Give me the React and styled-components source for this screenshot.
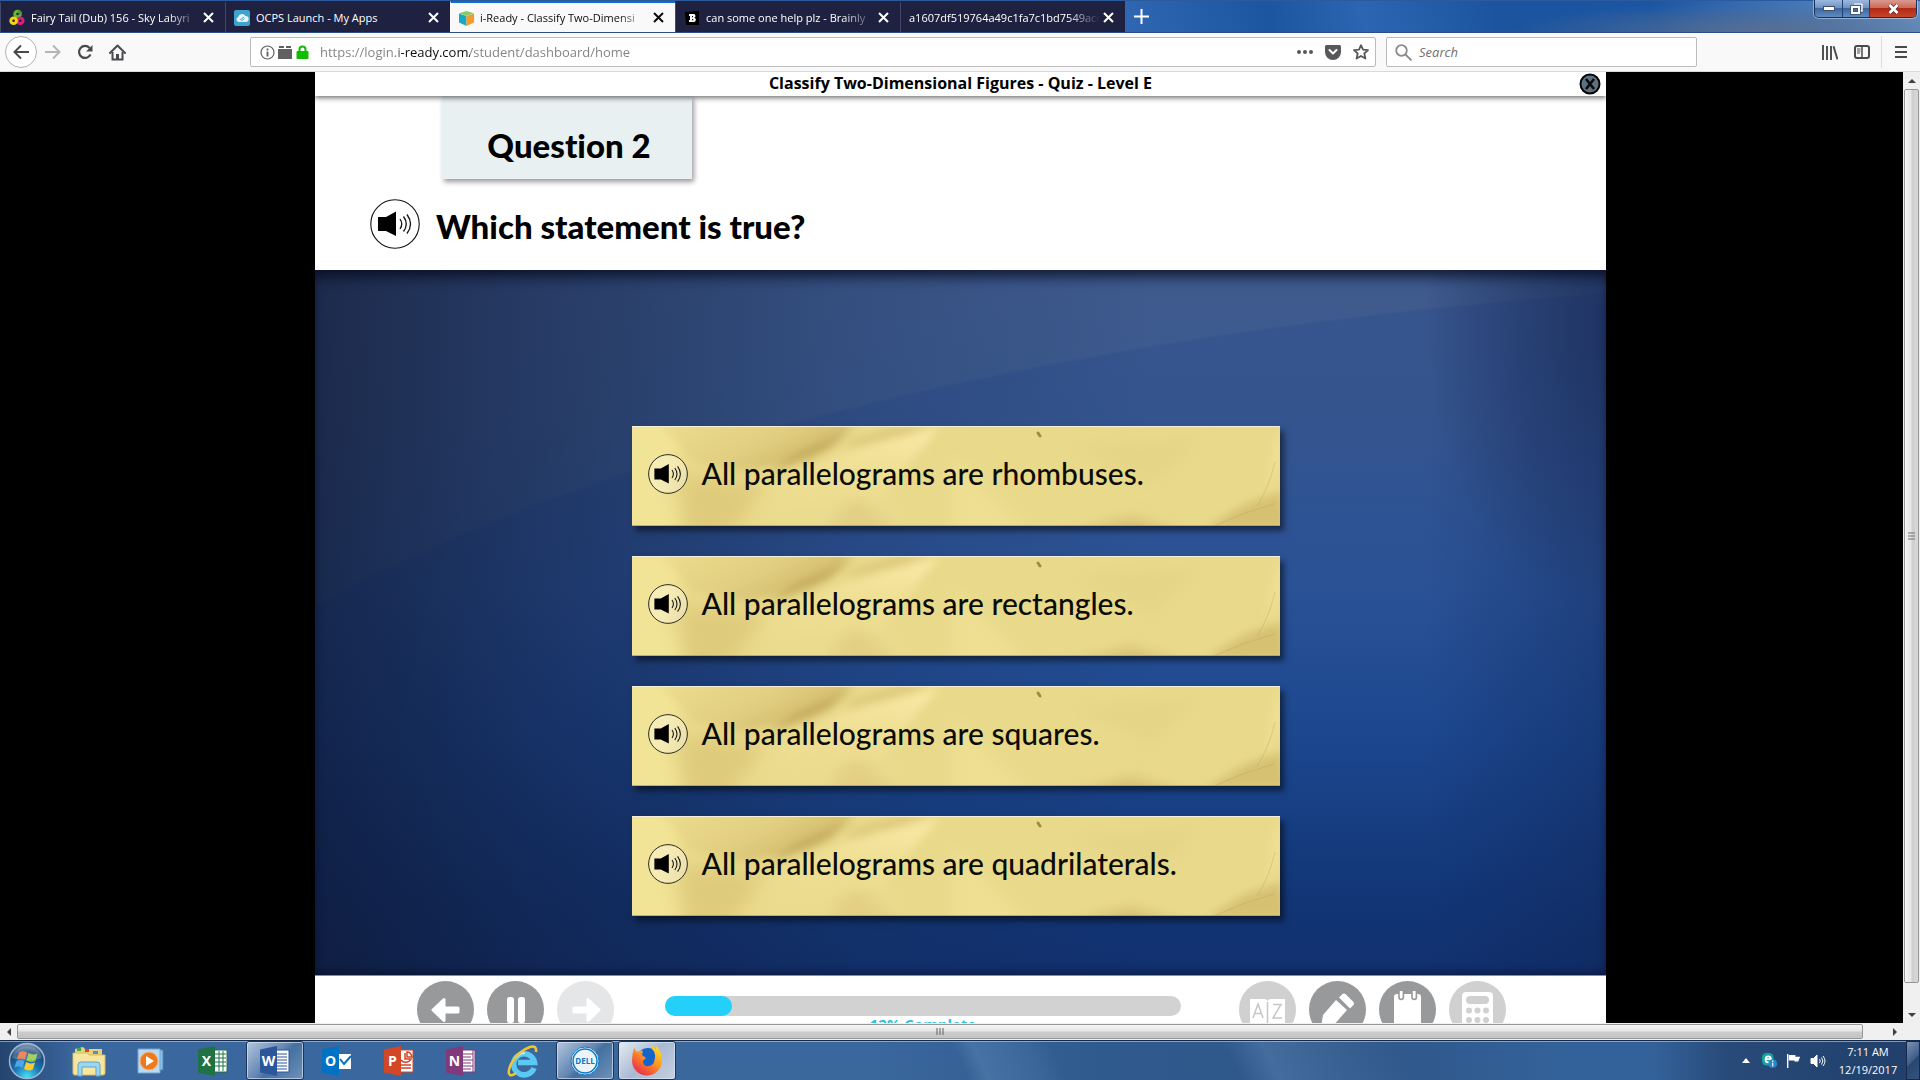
import styled, { createGlobalStyle } from 'styled-components'

const GlobalStyle = createGlobalStyle`
*{
box-sizing:border-box;
}
body{
margin:0;
background-color:#000;
font-family:"Open Sans","Noto Sans",sans-serif;
}
button{
border:0;
padding:0;
margin:0;
background:none;
color:inherit;
font:inherit;
cursor:pointer;
}
svg{
display:block;
flex-shrink:0;
}
`;

const Desktop = styled.div`
height:100vh;
display:flex;
flex-direction:column;
overflow:hidden;
`;

/* tab strip */
const TabStrip = styled.div`
height:33px;
display:flex;
align-items:stretch;
border-top:1px solid #2d5a9c;
border-bottom:1px solid #2a4f86;
background:
radial-gradient(ellipse 260px 30px at 92% 100%, rgba(92,110,140,.9), rgba(92,110,140,0) 100%),
linear-gradient(75deg, #3068b4 58%, #1c55a0 66%, #2c66b2 71%, #1b539e 78%, #1a56a4 86%, #4a7dbd 95%, #6a97cc 100%);
`;
const Tab = styled.div`
width:225px;
flex:0 1 auto;
display:flex;
align-items:center;
padding:0 9px 0 8px;
color:${(p) => (p.$active ? '#0c0c0d' : '#fff')};
background-color:${(p) => (p.$active ? '#f9f9fa' : '#1f2140')};
border-top:2px solid ${(p) => (p.$active ? '#0a6cd4' : '#1f2140')};
border-left:1px solid ${(p) => (p.$active ? '#f9f9fa' : '#45476a')};
`;
const TabButton = styled.button`
flex:1;
min-width:0;
height:100%;
display:flex;
align-items:center;
gap:6px;
text-align:left;
`;
const TabTitle = styled.span`
flex:1;
min-width:0;
overflow:hidden;
white-space:nowrap;
font-size:11px;
line-height:16px;
mask-image:${(p) => (p.$fade ? 'linear-gradient(to left, transparent, #000 32px)' : 'none')};
`;
const TabClose = styled.button`
width:16px;
height:16px;
display:flex;
align-items:center;
justify-content:center;
`;
const NewTab = styled.button`
width:32px;
display:flex;
align-items:center;
justify-content:center;
color:#fff;
`;
const WindowButtons = styled.div`
display:flex;
height:18px;
margin:-1px 3px 0 auto;
border:1px solid #1b2f55;
border-top:0;
border-radius:0 0 5px 5px;
overflow:hidden;
box-shadow:0 0 0 1px rgba(255,255,255,.4);
`;
const WindowButton = styled.button`
width:${(p) => (p.$close ? '47px' : '27px')};
display:flex;
align-items:center;
justify-content:center;
border-left:${(p) => (p.$first ? '0' : '1px solid #24406e')};
background:${(p) => (p.$close
    ? 'linear-gradient(#d99a8e 0%, #cc6a58 45%, #b02a14 50%, #c8432c 100%)'
    : 'linear-gradient(#9db8dd 0%, #6f93c6 45%, #3c689f 50%, #5f8cc4 100%)')};
`;

/* toolbar */
const Toolbar = styled.div`
height:39px;
display:flex;
align-items:center;
padding:0 3px 0 5px;
background-color:#f9f9fa;
border-bottom:1px solid #d8d8da;
color:#4a4a4c;
`;
const BackButton = styled.button`
width:32px;
height:32px;
display:flex;
align-items:center;
justify-content:center;
border:1px solid #b4b4b6;
border-radius:50%;
background-color:#fff;
`;
const ToolButton = styled.button`
width:32px;
height:32px;
display:flex;
align-items:center;
justify-content:center;
color:${(p) => (p.$off ? '#b5b5b7' : 'inherit')};
`;
const Field = styled.label`
height:30px;
display:flex;
align-items:center;
border:1px solid #bcbcbf;
border-radius:2px;
background-color:#fff;
`;
const AddressField = styled(Field)`
flex:1;
margin-left:117px;
padding-left:9px;
gap:2px;
`;
const FieldActions = styled.div`
display:flex;
`;
const SearchField = styled(Field)`
width:311px;
margin-left:10px;
padding:0 8px;
gap:7px;
color:#8b8b8d;
`;
const TextInput = styled.input`
flex:1;
min-width:0;
border:0;
padding:0;
outline:0;
background:transparent;
font-family:"Open Sans","Noto Sans",sans-serif;
font-size:13px;
line-height:18px;
color:#747476;
&::placeholder{
    color:#6f6f71;
    font-style:italic;
    opacity:1;
}
`;
const AddressInput = styled(TextInput)`
margin-left:8px;
color:transparent;
background-image:linear-gradient(to right, #808082 79px, #0c0c0d 79px, #0c0c0d 150px, #808082 150px);
background-clip:text;
`;
const FieldButton = styled.button`
width:28px;
height:28px;
display:flex;
align-items:center;
justify-content:center;
color:#58585a;
`;
const MenuGroup = styled.div`
width:220px;
display:flex;
align-items:center;
justify-content:flex-end;
`;
const MenuRule = styled.div`
width:1px;
height:32px;
margin:0 3px;
background-color:#dcdcde;
`;

/* page */
const Viewport = styled.div`
flex:1;
min-height:0;
display:grid;
grid-template-columns:minmax(0, 1fr) 17px;
grid-template-rows:minmax(0, 1fr) 17px;
background-color:#f0f0f0;
`;
const Page = styled.main`
overflow:hidden;
display:flex;
background-color:#000;
`;
const Lesson = styled.div`
width:68%;
max-width:1291px;
margin-left:315px;
display:flex;
flex-direction:column;
background-color:#fff;
`;
const TitleBar = styled.header`
height:24px;
display:flex;
align-items:flex-start;
justify-content:center;
padding-left:28px;
background-color:#fff;
box-shadow:0 2px 5px rgba(0,0,0,.55);
z-index:1;
`;
const Title = styled.h1`
flex:1;
margin:0;
text-align:center;
font-size:16px;
line-height:22px;
font-weight:700;
color:#000;
`;
const CloseLesson = styled.button`
width:24px;
margin:1px 4px 0 0;
display:flex;
justify-content:center;
`;
const Prompt = styled.section`
height:174px;
padding-left:55px;
font-family:Lato,"Open Sans",sans-serif;
font-variant-ligatures:none;
font-size:33px;
line-height:40px;
font-weight:900;
color:#000;
`;
const QuestionCard = styled.div`
width:250px;
height:83px;
margin-left:72px;
display:flex;
align-items:center;
justify-content:center;
padding:14px 0 0 4px;
background-color:#e9f0f2;
box-shadow:2px 3px 5px rgba(0,0,0,.4);
`;
const PromptRow = styled.div`
display:flex;
align-items:center;
gap:16px;
margin-top:20px;
`;
const PromptText = styled.h2`
margin:0;
padding-top:4px;
font:inherit;
`;
const Speak = styled.button`
width:${(p) => p.$size}px;
height:${(p) => p.$size}px;
flex-shrink:0;
`;
const Stage = styled.section`
flex:1;
min-height:0;
display:flex;
flex-direction:column;
align-items:center;
gap:30px;
padding:156px 10px 0 0;
box-shadow:inset 0 12px 14px -6px rgba(5,8,25,.8), inset 0 -6px 8px -4px rgba(5,8,25,.5);
background:
radial-gradient(ellipse 14% 40% at 100% 8%, rgba(20,32,70,.4), rgba(20,32,70,0)),
linear-gradient(to right, rgba(14,22,48,.7) 0%, rgba(16,28,60,.52) 16%, rgba(20,40,80,.22) 42%, transparent 65%, transparent 86%, rgba(16,36,84,.4) 100%),
radial-gradient(ellipse 156% 99% at 132% 100%, transparent 99.6%, rgba(120,140,150,.11) 100%),
linear-gradient(#38548c 0%, #34548f 22%, #2a5296 45%, #1c478f 66%, #123575 90%, #11306e 100%);
`;
const Choice = styled.div`
position:relative;
width:648px;
height:100px;
display:flex;
align-items:center;
gap:14px;
padding:0 16px 4px;
background-color:#e9d98a;
box-shadow:4px 5px 6px rgba(0,0,0,.5);
`;
const Texture = styled.svg`
position:absolute;
inset:0;
width:100%;
height:100%;
`;
const ChoiceSpeak = styled(Speak)`
position:relative;
`;
const ChoiceText = styled.button`
position:relative;
flex:1;
padding-bottom:2px;
text-align:left;
font-family:Lato,"Open Sans",sans-serif;
font-variant-ligatures:none;
font-size:30px;
line-height:36px;
font-weight:500;
color:#0c0c06;
`;
const Controls = styled.footer`
height:48px;
display:flex;
align-items:flex-start;
overflow:hidden;
padding:5px 100px 0 102px;
border-top:1px solid #8a8c9c;
background-color:#fff;
`;
const ControlGroup = styled.div`
display:flex;
gap:13px;
`;
const Round = styled.button`
width:57px;
height:57px;
border-radius:50%;
display:flex;
align-items:center;
justify-content:center;
color:#fff;
background-color:${(p) => p.$tone};
`;
const Progress = styled.div`
flex:1;
margin:15px 58px 0 51px;
text-align:center;
font-size:15px;
line-height:17px;
font-weight:700;
color:#2cc0dc;
`;
const Track = styled.div`
height:20px;
border-radius:10px;
background-color:#d2d2d2;
`;
const Fill = styled.div`
height:20px;
border-radius:10px;
background-color:#22d0fa;
`;

/* scroll bars */
const VBar = styled.div`
display:flex;
flex-direction:column;
align-items:center;
background-color:#f0f0f0;
`;
const HBar = styled.div`
display:flex;
align-items:center;
background-color:#f0f0f0;
`;
const Arrow = styled.button`
width:17px;
height:17px;
display:flex;
align-items:center;
justify-content:center;
`;
const VThumb = styled.div`
width:15px;
flex:1;
margin-bottom:23px;
display:flex;
align-items:center;
justify-content:center;
border:1px solid #979797;
border-radius:2px;
background:linear-gradient(to right, #f5f5f5, #e6e6e6 45%, #cfcfcf 55%, #d8d8d8);
`;
const HThumb = styled.div`
height:15px;
flex:1;
margin-right:23px;
display:flex;
align-items:center;
justify-content:center;
border:1px solid #979797;
border-radius:2px;
background:linear-gradient(#f5f5f5, #e6e6e6 45%, #cbcbcb 55%, #c4c4c4);
`;

/* task bar */
const TaskBar = styled.nav`
height:40px;
display:flex;
align-items:stretch;
border-top:1px solid #152a49;
box-shadow:inset 0 1px 0 rgba(190,210,235,.6);
background:
linear-gradient(65deg, transparent 50%, rgba(120,165,210,.25) 51%, rgba(120,165,210,.1) 54%, transparent 55%, transparent 64%, rgba(120,165,210,.28) 66%, transparent 73%),
linear-gradient(to right, #24446f 0%, #3a679e 4%, #3a679c 45%, #2f5a8e 58%, #2f5688 70%, #33629a 82%, #33629a 86%, #284a78 90%, #203f6a 100%);
`;
const StartButton = styled.button`
width:54px;
display:flex;
align-items:center;
justify-content:center;
`;
const Tasks = styled.div`
display:flex;
gap:4px;
padding:0 0 0 6px;
`;
const TaskButton = styled.button`
width:58px;
height:39px;
display:flex;
align-items:center;
justify-content:center;
border-radius:3px;
border:1px solid ${(p) => (p.$state ? '#1c3458' : 'transparent')};
box-shadow:${(p) => (p.$state ? 'inset 0 0 0 1px rgba(220,232,248,.65)' : 'none')};
background:${(p) => (p.$state === 'front'
    ? 'linear-gradient(135deg, #e6ebf3 0%, #a8b9d2 50%, #c6d1e2 100%)'
    : p.$state === 'open'
      ? 'linear-gradient(135deg, #b4c6de 0%, #6587b3 45%, #44709f 55%, #6f92bb 100%)'
      : 'none')};
`;
const Tray = styled.div`
margin-left:auto;
display:flex;
align-items:center;
gap:8px;
color:#fff;
`;
const Notices = styled.button`
width:12px;
height:24px;
display:flex;
align-items:center;
`;
const Clock = styled.div`
width:60px;
margin-left:4px;
text-align:center;
white-space:nowrap;
font-size:11px;
line-height:18px;
`;
const ShowDesktop = styled.button`
width:14px;
height:39px;
border:1px solid #17294a;
background:linear-gradient(135deg, #7c93b3 0%, #3d5c88 50%, #29466f 52%, #33547f 100%);
`;

const Cross = ({ size = 11, width = 2 }) => (
  <svg width={size} height={size} viewBox="0 0 11 11" fill="none" stroke="currentColor" strokeWidth={width}>
    <path d="M1 1l9 9M10 1l-9 9" />
  </svg>
)

const Speaker = ({ size }) => (
  <svg width={size} height={size} viewBox="0 0 50 50">
    <circle cx="25" cy="25" r="24.2" fill="rgba(255,255,255,.3)" stroke="#111" strokeWidth="1.1" />
    <path d="M8 18h8l10-5.500v24.500l-10-5H8z" fill="#000" />
    <g fill="none" stroke="#111" strokeWidth="1.300">
      <path d="M30 20q3.500 5 0 10" />
      <path d="M33.500 17.500q5.500 7.500 0 15" />
      <path d="M37 15.500q7 9.500 0 19" />
    </g>
  </svg>
)

const TabIcon = ({ kind }) => {
  if (kind === 'rings') return (
    <svg width="16" height="17" viewBox="0 0 16 17" fill="none" strokeWidth="3">
      <circle cx="8.500" cy="5" r="2.800" stroke="#6cb52d" />
      <circle cx="11.300" cy="11.800" r="2.800" stroke="#d61f7c" />
      <circle cx="4.600" cy="11.800" r="2.800" stroke="#f3d516" />
      <path d="M9 2a3 3 0 012.500 4" stroke="#3d9c2f" />
    </svg>
  )
  if (kind === 'cloud') return (
    <svg width="16" height="16" viewBox="0 0 16 16">
      <rect width="16" height="16" rx="2" fill="#3fa3cf" />
      <path d="M4.500 12a2.600 2.600 0 01-.3-5A4 4 0 0111.500 6a3 3 0 01.3 6z" fill="#e8f6fc" />
      <path d="M6 10l4-3M7.500 11l3-2.500" stroke="#3fa3cf" />
    </svg>
  )
  if (kind === 'box') return (
    <svg width="15" height="16" viewBox="0 0 15 16">
      <path d="M0 3.500l7.500 2.500v10L0 12.500z" fill="#17a9c4" />
      <path d="M15 3.500L7.500 6v10l7.500-3.500z" fill="#f59b2c" />
      <path d="M7.500 1L15 3.200 7.500 6 0 3.200z" fill="#8cc96a" />
    </svg>
  )
  return (
    <svg width="16" height="16" viewBox="0 0 16 16">
      <path d="M1 2l14-1v14H2z" fill="#000" />
      <path d="M5 4h4.500q2 0 2 2 0 1.300-1.200 1.700 1.600.4 1.600 2.100 0 2.200-2.400 2.200H5v-2h1V6H5zM8 6v1.300h1V6zM8 9v1.300h1.200V9z" fill="#fff" />
    </svg>
  )
}

const tabs = [
  { title: 'Fairy Tail (Dub) 156 - Sky Labyri', kind: 'rings', fade: true },
  { title: 'OCPS Launch - My Apps', kind: 'cloud' },
  { title: 'i-Ready - Classify Two-Dimensi', kind: 'box', active: true, fade: true },
  { title: 'can some one help plz - Brainly', kind: 'brainly', fade: true },
  { title: 'a1607df519764a49c1fa7c1bd7549acc', fade: true },
]

const BrowserTabs = () => (
  <TabStrip>
    {tabs.map((t) => (
      <Tab key={t.title} $active={t.active}>
        <TabButton>
          {t.kind && <TabIcon kind={t.kind} />}
          <TabTitle $fade={t.fade}>{t.title}</TabTitle>
        </TabButton>
        <TabClose aria-label="Close tab"><Cross /></TabClose>
      </Tab>
    ))}
    <NewTab aria-label="New tab">
      <svg width="15" height="15" viewBox="0 0 15 15" stroke="currentColor" strokeWidth="2"><path d="M7.500 0v15M0 7.500h15" /></svg>
    </NewTab>
    <WindowButtons>
      <WindowButton $first aria-label="Minimize">
        <svg width="12" height="5" viewBox="0 0 12 5"><rect x=".5" y=".5" width="11" height="4" fill="#fff" stroke="#40506c" /></svg>
      </WindowButton>
      <WindowButton aria-label="Restore">
        <svg width="13" height="12" viewBox="0 0 13 12" fill="none">
          <path d="M4 1h8v7h-2" stroke="#40506c" strokeWidth="3" />
          <path d="M4 1h8v7h-2" stroke="#fff" strokeWidth="1.500" />
          <path d="M2 4h7v6H2z" stroke="#40506c" strokeWidth="3.600" />
          <path d="M2 4h7v6H2z" stroke="#fff" strokeWidth="2" />
        </svg>
      </WindowButton>
      <WindowButton $close aria-label="Close">
        <svg width="13" height="12" viewBox="0 0 13 12" fill="none">
          <path d="M2.500 2l8 8M10.500 2l-8 8" stroke="#5a3030" strokeWidth="4.500" />
          <path d="M2.500 2l8 8M10.500 2l-8 8" stroke="#fff" strokeWidth="2.800" />
        </svg>
      </WindowButton>
    </WindowButtons>
  </TabStrip>
)

const BrowserToolbar = () => (
  <Toolbar>
    <BackButton aria-label="Back">
      <svg width="16" height="16" viewBox="0 0 16 16" fill="none" stroke="currentColor" strokeWidth="2"><path d="M16 8H2M8 1.500L1.500 8 8 14.500" /></svg>
    </BackButton>
    <ToolButton $off aria-label="Forward">
      <svg width="16" height="16" viewBox="0 0 16 16" fill="none" stroke="currentColor" strokeWidth="2"><path d="M0 8h14M8 1.500L14.500 8 8 14.500" /></svg>
    </ToolButton>
    <ToolButton aria-label="Reload">
      <svg width="16" height="16" viewBox="0 0 16 16" fill="none" stroke="currentColor" strokeWidth="2.200">
        <path d="M13.500 10.500A6 6 0 1112.600 4" />
        <path d="M15.500 1v6.500H9z" fill="currentColor" stroke="none" />
      </svg>
    </ToolButton>
    <ToolButton aria-label="Home">
      <svg width="17" height="17" viewBox="0 0 17 17" fill="none" stroke="currentColor" strokeWidth="2">
        <path d="M1 9l7.500-7.500L16 9" strokeLinecap="round" strokeLinejoin="round" />
        <path d="M3.500 8v7.500h10V8" />
        <path d="M7 15.500V10h3v5.500z" fill="currentColor" stroke="none" />
      </svg>
    </ToolButton>
    <AddressField>
      <svg width="15" height="15" viewBox="0 0 15 15" fill="none" stroke="#5f5f61">
        <circle cx="7.500" cy="7.500" r="6.500" strokeWidth="1.200" />
        <path d="M7.500 6.500v5M7.500 3.500v2" strokeWidth="1.800" />
      </svg>
      <svg width="16" height="15" viewBox="0 0 16 15" fill="#606062"><path d="M1 4h14v10H1zM2 1h5v2H2zM9 1h5v2H9z" /></svg>
      <svg width="15" height="15" viewBox="0 0 15 15">
        <rect x="1.500" y="6" width="12" height="8" rx="1" fill="#12bc00" />
        <path d="M4.500 7V4.500a3 3 0 016 0V7" fill="none" stroke="#12bc00" strokeWidth="2" />
      </svg>
      <AddressInput aria-label="Address" defaultValue="https://login.i-ready.com/student/dashboard/home" />
      <FieldActions>
        <FieldButton aria-label="Page actions">
          <svg width="16" height="4" viewBox="0 0 16 4" fill="currentColor"><circle cx="2" cy="2" r="2" /><circle cx="8" cy="2" r="2" /><circle cx="14" cy="2" r="2" /></svg>
        </FieldButton>
        <FieldButton aria-label="Save to Pocket">
          <svg width="16" height="15" viewBox="0 0 16 15">
            <path d="M1.500 0h13A1.500 1.500 0 0116 1.500V7A8 8 0 010 7V1.500A1.500 1.500 0 011.500 0z" fill="currentColor" />
            <path d="M4.500 5L8 8.500 11.500 5" fill="none" stroke="#fff" strokeWidth="2" strokeLinecap="round" strokeLinejoin="round" />
          </svg>
        </FieldButton>
        <FieldButton aria-label="Bookmark">
          <svg width="16" height="16" viewBox="0 0 16 16" fill="none" stroke="currentColor" strokeWidth="1.800" strokeLinejoin="round">
            <path d="M8 1.200l2 4.500 5 .5-3.700 3.300 1.100 5L8 12l-4.400 2.500 1.100-5L1 6.200l5-.5z" />
          </svg>
        </FieldButton>
      </FieldActions>
    </AddressField>
    <SearchField>
      <svg width="17" height="17" viewBox="0 0 17 17" fill="none" stroke="currentColor" strokeWidth="1.800"><circle cx="6.500" cy="6.500" r="5.300" /><path d="M10.500 10.500l6 6" /></svg>
      <TextInput aria-label="Search" placeholder="Search" />
    </SearchField>
    <MenuGroup>
      <ToolButton aria-label="Library">
        <svg width="16" height="15" viewBox="0 0 16 15" fill="none" stroke="currentColor" strokeWidth="1.900"><path d="M1 0v15M5 1v14M9 1v14M11.500 1.200L15.500 14.500" /></svg>
      </ToolButton>
      <ToolButton aria-label="Sidebars">
        <svg width="16" height="14" viewBox="0 0 16 14" fill="none" stroke="currentColor">
          <rect x="1" y="1" width="14" height="12" rx="2" strokeWidth="2" />
          <path d="M8 1v12" strokeWidth="1.500" />
          <path d="M3 4h3.500M3 6h3.500M3 8h3" />
        </svg>
      </ToolButton>
      <MenuRule />
      <ToolButton aria-label="Menu">
        <svg width="12" height="12" viewBox="0 0 12 12" stroke="currentColor" strokeWidth="2"><path d="M0 1h12M0 6h12M0 11h12" /></svg>
      </ToolButton>
    </MenuGroup>
  </Toolbar>
)

const Paper = ({ id }) => (
  <Texture viewBox="0 0 648 100" preserveAspectRatio="none" aria-hidden="true">
    <defs>
      <filter id={`soft${id}`} x="-10%" y="-10%" width="120%" height="120%"><feGaussianBlur stdDeviation="4" /></filter>
      <filter id={`wide${id}`} x="-10%" y="-30%" width="120%" height="160%"><feGaussianBlur stdDeviation="8" /></filter>
      <linearGradient id={`fold${id}`} x1="0" y1="0" x2="1" y2=".5">
        <stop offset="0" stopColor="#efdf90" />
        <stop offset=".6" stopColor="#e1ce80" />
        <stop offset="1" stopColor="#cdb566" />
      </linearGradient>
      <linearGradient id={`light${id}`} x1=".4" y1="0" x2=".3" y2="1">
        <stop offset="0" stopColor="#fae9a4" />
        <stop offset="1" stopColor="#eadb8e" stopOpacity=".3" />
      </linearGradient>
    </defs>
    <rect width="648" height="100" fill="#e9d98b" />
    <g filter={`url(#wide${id})`}>
      <path d="M-20-20h90L34 60 50 120h-70z" fill="#f2e496" />
      <path d="M50 50l80 10-40 60H56z" fill="#dfcb7c" />
      <path d="M120 120l40-70h90l30 70z" fill="#eadb8e" />
      <path d="M220 66l60 54H190z" fill="#e2cf84" />
      <path d="M320 30l90 90H320z" fill="#eedf93" />
      <path d="M440 20l80 40 50-50z" fill="#e5d587" />
      <path d="M440 110l60-16 60 20z" fill="#cdb668" />
    </g>
    <g filter={`url(#soft${id})`}>
      <path d="M22-8h205L180 32 112 46 62 36z" fill={`url(#fold${id})`} />
      <path d="M222 2l-26 22-60 24 26-20z" fill="#bfa658" opacity=".8" />
      <path d="M308 0L205 30 140 62l-20 30 130-20z" fill={`url(#light${id})`} />
      <path d="M222 14l50-14h30L214 22z" fill="#dac578" />
      <path d="M650 66l-36 12-40 24h80z" fill="#d6c172" />
      <path d="M652-6v40l-18 34 8-50z" fill="#efe094" />
    </g>
    <path d="M643 36q-6 26-18 44M642 78q-30 8-60 22" fill="none" stroke="#b89e50" strokeOpacity=".35" />
    <path d="M406 7l2 3" stroke="#a08a46" strokeWidth="3" strokeLinecap="round" />
    <path d="M0 .5h648" stroke="#f5efd8" />
    <path d="M0 99.500h648" stroke="#9c8a55" strokeOpacity=".6" />
  </Texture>
)

const choices = ['rhombuses', 'rectangles', 'squares', 'quadrilaterals']
const progress = 12.9

const LessonPage = () => (
  <Lesson>
    <TitleBar>
      <Title>Classify Two-Dimensional Figures - Quiz - Level E</Title>
      <CloseLesson aria-label="Close lesson">
        <svg width="22" height="22" viewBox="0 0 22 22">
          <circle cx="11" cy="11" r="9.500" fill="#5d717e" stroke="#050505" strokeWidth="2" />
          <path d="M7 6l8 10M15 6L7 16" stroke="#0a0a0a" strokeWidth="2.600" />
        </svg>
      </CloseLesson>
    </TitleBar>
    <Prompt>
      <QuestionCard>Question 2</QuestionCard>
      <PromptRow>
        <Speak $size={50} aria-label="Read question"><Speaker size={50} /></Speak>
        <PromptText>Which statement is true?</PromptText>
      </PromptRow>
    </Prompt>
    <Stage>
      {choices.map((c) => (
        <Choice key={c}>
          <Paper id={c} />
          <ChoiceSpeak $size={40} aria-label={`Read ${c}`}><Speaker size={40} /></ChoiceSpeak>
          <ChoiceText>All parallelograms are {c}.</ChoiceText>
        </Choice>
      ))}
    </Stage>
    <Controls>
      <ControlGroup>
        <Round $tone="#97999b" aria-label="Previous">
          <svg width="30" height="28" viewBox="0 0 30 28" fill="#fff" stroke="#fff" strokeWidth="3" strokeLinejoin="round"><path d="M2 14L13 3.500V12h14v4H13v8.500z" /></svg>
        </Round>
        <Round $tone="#97999b" aria-label="Pause">
          <svg width="20" height="28" viewBox="0 0 20 28" fill="#fff"><rect x="1" y="1" width="7" height="26" rx="2.500" /><rect x="12" y="1" width="7" height="26" rx="2.500" /></svg>
        </Round>
        <Round $tone="#e5e6e8" aria-label="Next">
          <svg width="30" height="28" viewBox="0 0 30 28" fill="#fff" stroke="#fff" strokeWidth="3" strokeLinejoin="round"><path d="M28 14L17 3.500V12H3v4h14v8.500z" /></svg>
        </Round>
      </ControlGroup>
      <Progress>
        <Track role="progressbar" aria-valuenow={12}>
          <Fill style={{ width: `${progress}%` }} />
        </Track>
        12% Complete
      </Progress>
      <ControlGroup>
        <Round $tone="#d0d0d0" aria-label="Glossary">
          <svg width="57" height="57" viewBox="0 0 57 57" fill="none">
            <path d="M11 18h14q3 0 3.500 2 .5-2 3.500-2h14v30H11z" fill="#fff" />
            <path d="M28.500 21v26M14 37l5-14 5 14M15.500 32.500h7M34 23.500h8L34 37h9" stroke="#c6c6c6" strokeWidth="1.500" />
          </svg>
        </Round>
        <Round $tone="#97999b" aria-label="Pencil">
          <svg width="57" height="57" viewBox="0 0 57 57" fill="#fff">
            <path d="M27 19l11 10-15 17H12l2-12z" />
            <path d="M30 16.500l3.500-3.500q1.500-1 3 0l8 8q1 1.500 0 3l-3.500 3.500z" />
          </svg>
        </Round>
        <Round $tone="#97999b" aria-label="Notepad">
          <svg width="57" height="57" viewBox="0 0 57 57">
            <path d="M15 16q0-3 3-3h21q3 0 3 3v33H15z" fill="#fff" />
            <path d="M20 10v6q0 2.500 2.200 2.500t2.200-2.500v-6M33 10v6q0 2.500 2.200 2.500t2.200-2.500v-6" fill="#fff" stroke="#97999b" strokeWidth="1.600" />
          </svg>
        </Round>
        <Round $tone="#d0d0d0" aria-label="Calculator">
          <svg width="57" height="57" viewBox="0 0 57 57" fill="#d0d0d0">
            <rect x="13" y="11" width="31" height="42" rx="4" fill="#fff" />
            <rect x="17" y="15" width="23" height="8" rx="4" />
            <circle cx="20" cy="29.500" r="3" /><circle cx="28.500" cy="29.500" r="3" /><circle cx="37" cy="29.500" r="3" />
            <circle cx="20" cy="39" r="3" /><circle cx="28.500" cy="39" r="3" /><circle cx="37" cy="39" r="3" />
          </svg>
        </Round>
      </ControlGroup>
    </Controls>
  </Lesson>
)

const Triangle = ({ d }) => <svg width="8" height="8" viewBox="0 0 8 8" fill="#404040"><path d={d} /></svg>

const StartOrb = () => (
  <svg width="38" height="38" viewBox="0 0 38 38">
    <defs>
      <radialGradient id="orb" cx=".5" cy=".95" r=".95">
        <stop offset="0" stopColor="#46e0fa" />
        <stop offset=".4" stopColor="#1a78b4" />
        <stop offset=".75" stopColor="#1a4678" />
        <stop offset="1" stopColor="#8ba4bd" />
      </radialGradient>
    </defs>
    <circle cx="19" cy="19" r="17.500" fill="url(#orb)" stroke="#9db4cc" strokeWidth="1.500" />
    <path d="M11 10.500q4-2.500 8 0l-2 7q-4-2-8 0z" fill="#ee6a2e" />
    <path d="M20.500 11q4 2.500 9 .5l-2.200 7.500q-4.500 2-8.800-.5z" fill="#8cc43c" />
    <path d="M8.500 19q4-2 8 0l-2 7q-4-2.500-8-.5z" fill="#4ca6e8" />
    <path d="M18 20q4 2.500 9 .5l-2.200 7q-4.500 2-8.800-.5z" fill="#fbc934" />
    <path d="M4 16a15.500 15.500 0 0130 0q-15 5-30 0z" fill="#fff" opacity=".2" />
  </svg>
)

/* the Office tiles share a leaning cover with a letter and a sheet behind it */
const letterStyle = { fontFamily: '"Open Sans",sans-serif', fontSize: 14, fontWeight: 700 }
const OfficeIcon = ({ letter, color, children }) => (
  <svg width="32" height="32" viewBox="0 0 32 32">
    <path d="M16 5h14v22H16z" fill="#fff" stroke={color} strokeWidth="1" />
    <g stroke={color} fill="none">{children}</g>
    <path d="M1 4.500L18 1v30L1 27.500z" fill={color} />
    <text x="9.500" y="21" textAnchor="middle" fill="#fff" style={letterStyle}>{letter}</text>
  </svg>
)

const tasks = [
  {
    name: 'File Explorer',
    icon: (
      <svg width="34" height="32" viewBox="0 0 34 32">
        <path d="M3 4l8-2 2 2h17v24H3z" fill="#e8cf7a" />
        <path d="M5 3h4v3H5z" fill="#35a853" /><path d="M13 4h4v3h-4z" fill="#d9472b" /><path d="M21 6h5v3h-5z" fill="#4a90d9" />
        <path d="M1 8h14l2 2h16v18q0 2-2 2H3q-2 0-2-2z" fill="#f7e6a0" stroke="#d9bc62" />
        <path d="M6 31V20q0-3 3-3h16q3 0 3 3v11h-4v-9H10v9z" fill="#9ed6ee" stroke="#5aa6cc" />
      </svg>
    ),
  },
  {
    name: 'Media Player',
    icon: (
      <svg width="28" height="26" viewBox="0 0 28 26">
        <path d="M8 2h18v20H8z" fill="#8fc0e6" stroke="#4a86b8" />
        <path d="M1 1h22v24H1z" fill="#b9daf2" stroke="#6fa5d2" />
        <circle cx="12" cy="13" r="9" fill="#ee7a1e" stroke="#f7b272" />
        <path d="M9 8l8 5-8 5z" fill="#fff" />
      </svg>
    ),
  },
  { name: 'Excel', icon: <OfficeIcon letter="X" color="#1f7244"><path d="M18 9h11M18 13h11M18 17h11M18 21h11M22 6v20M26 6v20" /></OfficeIcon> },
  { name: 'Word', state: 'open', icon: <OfficeIcon letter="W" color="#2b579a"><path d="M18 9h10M18 12h10M18 15h10M18 18h10M18 21h10M18 24h10" /></OfficeIcon> },
  {
    name: 'Outlook',
    icon: (
      <svg width="32" height="32" viewBox="0 0 32 32">
        <path d="M17 9h13v15H17z" fill="#fff" />
        <path d="M19 14l4 5 7-8" fill="none" stroke="#0072c6" strokeWidth="2" />
        <path d="M1 4.500L18 1v30L1 27.500z" fill="#0072c6" />
        <text x="9.500" y="21" textAnchor="middle" fill="#fff" style={letterStyle}>O</text>
      </svg>
    ),
  },
  { name: 'PowerPoint', icon: <OfficeIcon letter="P" color="#d24726"><path d="M22 8v6h6a6 6 0 01-10 1M24 7q4 0 5 5h-5zM18 20h10M18 23h10" strokeWidth="1.500" /></OfficeIcon> },
  { name: 'OneNote', icon: <OfficeIcon letter="N" color="#80397b"><path d="M18 9h10M18 12h8M18 15h10M18 18h8M18 21h10M18 24h8M28 5v22" /></OfficeIcon> },
  {
    name: 'Internet Explorer',
    icon: (
      <svg width="34" height="34" viewBox="0 0 34 34" fill="none">
        <path d="M28 24a10.500 10.500 0 11.500-5.500H12" stroke="#5cc8f4" strokeWidth="5.500" />
        <path d="M10 14q3-5 9-5" stroke="#b8ecfc" strokeWidth="2" />
        <path d="M30 8q1-7-6-5Q12 7 5 20q-4 9-1 11 2 1 6-2" stroke="#f2c62c" strokeWidth="2.600" />
      </svg>
    ),
  },
  {
    name: 'Dell',
    state: 'open',
    icon: (
      <svg width="30" height="30" viewBox="0 0 30 30">
        <circle cx="15" cy="15" r="14" fill="#fff" stroke="#0a78c2" />
        <circle cx="15" cy="15" r="12" fill="#eef3f8" stroke="#0a78c2" strokeWidth="1.500" />
        <text x="15" y="18" textAnchor="middle" fill="#0a78c2" style={{ ...letterStyle, fontSize: 8 }}>DELL</text>
      </svg>
    ),
  },
  {
    name: 'Firefox',
    state: 'front',
    icon: (
      <svg width="32" height="32" viewBox="0 0 32 32">
        <defs>
          <linearGradient id="fox" x1=".9" y1="0" x2=".2" y2="1">
            <stop offset="0" stopColor="#ffe52e" />
            <stop offset=".45" stopColor="#ff9820" />
            <stop offset="1" stopColor="#e8254f" />
          </linearGradient>
        </defs>
        <circle cx="17" cy="14" r="11" fill="#1565c8" />
        <path d="M3 3l3 4q3-2 6-1l-1 4 4 3-3 3q0 6 6 5 4-1 5-4 3-8-2-13l-1-4q3 2 5 5V1q6 6 6 14a15 15 0 01-30 1Q1 9 3 3z" fill="url(#fox)" />
      </svg>
    ),
  },
]

const WindowsTaskBar = () => (
  <TaskBar>
    <StartButton aria-label="Start"><StartOrb /></StartButton>
    <Tasks>
      {tasks.map((t) => (
        <TaskButton key={t.name} $state={t.state} aria-label={t.name}>{t.icon}</TaskButton>
      ))}
    </Tasks>
    <Tray>
      <Notices aria-label="Show hidden icons">
        <svg width="8" height="5" viewBox="0 0 8 5" fill="#fff"><path d="M4 0l4 5H0z" /></svg>
      </Notices>
      <svg width="16" height="16" viewBox="0 0 18 18" fill="none">
        <rect width="13" height="14" rx="5" fill="#14a3a0" />
        <path d="M4 7h6q0-3.200-3-3.200T4 7.500q0 3 3 3h2" stroke="#fff" strokeWidth="2" />
        <circle cx="12" cy="12" r="5" fill="#2a88c8" />
        <path d="M12 11v4M12 8.500v1.500" stroke="#fff" strokeWidth="1.300" />
      </svg>
      <svg width="16" height="15" viewBox="0 0 17 16" fill="#fff"><path d="M1 1h1.500v15H1zM3 2h7v2h5l-2 5H9V8H3z" /></svg>
      <svg width="16" height="16" viewBox="0 0 16 16" fill="none" stroke="#fff">
        <path d="M1 5.500h2.500L7 2v12l-3.500-3.500H1z" fill="#fff" />
        <path d="M9.500 6q1.500 2 0 4M11.500 4.500q2.800 3.500 0 7M13 3q4 5 0 10" />
      </svg>
      <Clock>
        <div>7:11 AM</div>
        <div>12/19/2017</div>
      </Clock>
      <ShowDesktop aria-label="Show desktop" />
    </Tray>
  </TaskBar>
)

export default function App() {
  return (
    <Desktop>
      <GlobalStyle />
      <BrowserTabs />
      <BrowserToolbar />
      <Viewport>
        <Page>
          <LessonPage />
        </Page>
        <VBar>
          <Arrow aria-label="Scroll up"><Triangle d="M4 2l4 4H0z" /></Arrow>
          <VThumb>
            <svg width="7" height="8" viewBox="0 0 7 8" stroke="#707070"><path d="M0 1h7M0 4h7M0 7h7" /></svg>
          </VThumb>
          <Arrow aria-label="Scroll down"><Triangle d="M0 2h8L4 6z" /></Arrow>
        </VBar>
        <HBar>
          <Arrow aria-label="Scroll left"><Triangle d="M6 0v8L2 4z" /></Arrow>
          <HThumb>
            <svg width="8" height="7" viewBox="0 0 8 7" stroke="#606060"><path d="M1 0v7M4 0v7M7 0v7" /></svg>
          </HThumb>
          <Arrow aria-label="Scroll right"><Triangle d="M2 0v8l4-4z" /></Arrow>
        </HBar>
      </Viewport>
      <WindowsTaskBar />
    </Desktop>
  )
}
